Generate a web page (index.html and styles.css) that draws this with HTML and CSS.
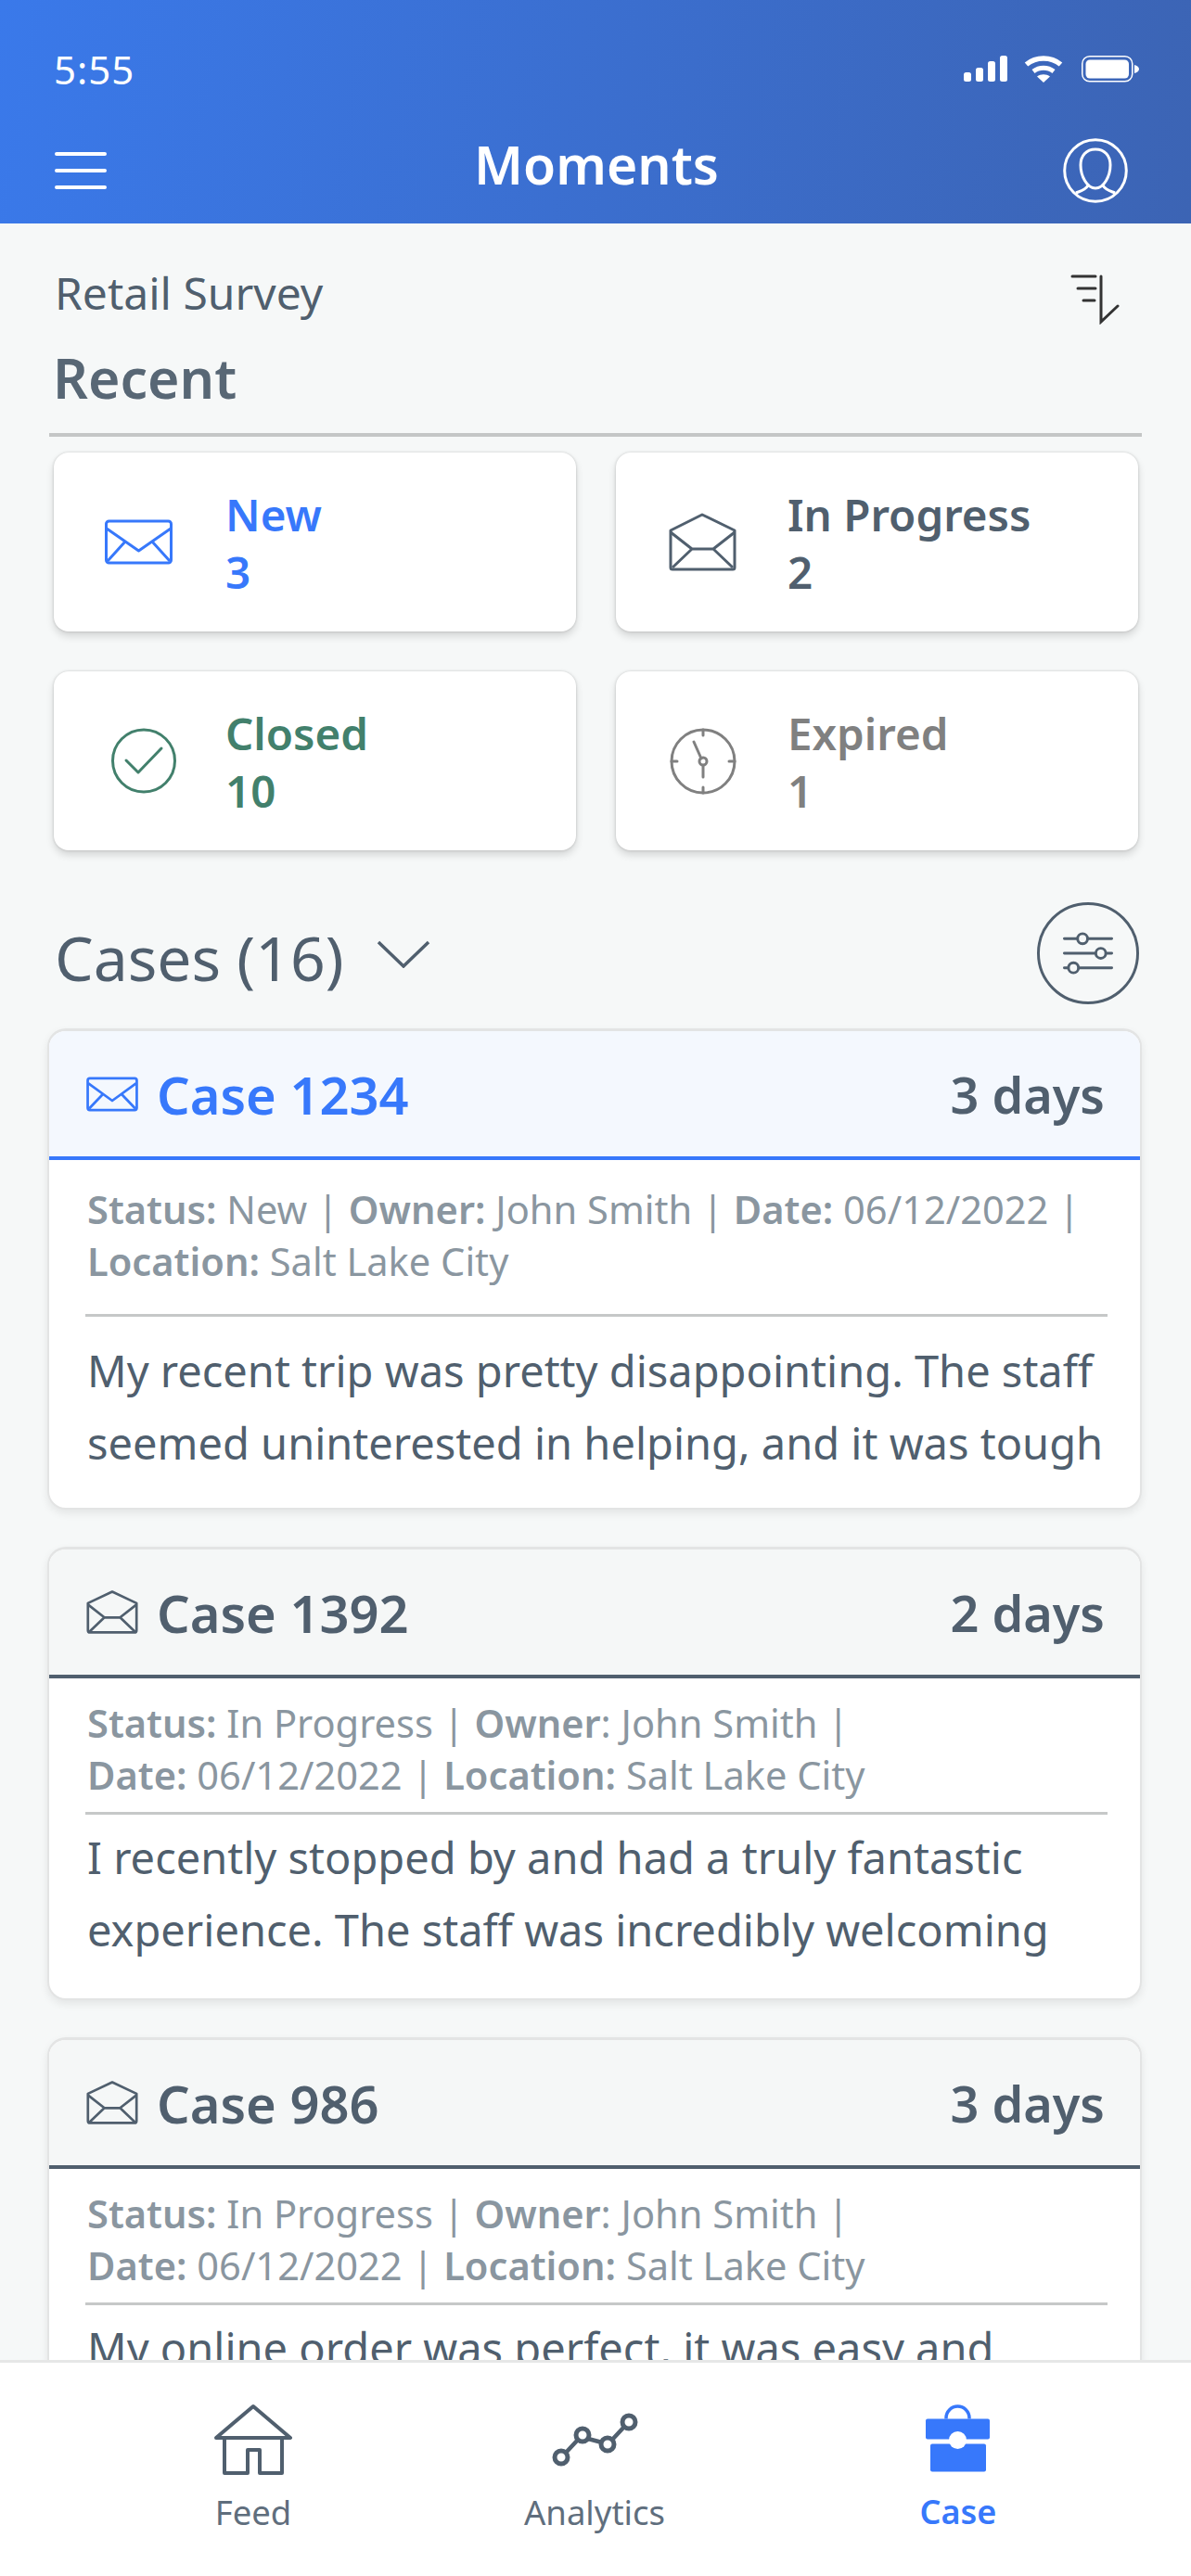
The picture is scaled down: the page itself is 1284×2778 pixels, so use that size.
FILE: index.html
```html
<!DOCTYPE html>
<html lang="en">
<head>
    <meta charset="UTF-8">
    <title>Moments</title>
    <link rel="stylesheet" href="styles.css">
</head>
<body>
<div class="phone">

    <header class="app-header">
        <div class="status-bar">
            <span class="time">5:55</span>
            <div class="status-icons">
                <svg width="47" height="28" viewBox="0 0 47 28" fill="#fff"><rect x="0" y="18" width="8" height="10" rx="2.5"/><rect x="13" y="13" width="8" height="15" rx="2.5"/><rect x="26" y="6" width="8" height="22" rx="2.5"/><rect x="39" y="0" width="8" height="28" rx="2.5"/></svg>
                <svg width="42" height="29" viewBox="0 0 42 29" fill="none" stroke="#fff"><path d="M2.5 9.5C13 .8 29 .8 39.500 9.500" stroke-width="5.500"/><path d="M10 17c6.500-5 15.500-5 22 0" stroke-width="5"/><path d="M14 22.500c4-3 10-3 14 0L21 29z" fill="#fff" stroke="none"/></svg>
                <svg width="62" height="29" viewBox="0 0 62 29" fill="none"><rect x=".75" y=".75" width="54" height="27" rx="8" stroke="#fff" stroke-width="1.500"/><rect x="4.500" y="4.500" width="46.500" height="20" rx="4.500" fill="#fff"/><path d="M57 10c3 .5 5 2.500 5 4.500s-2 4-5 4.500z" fill="#fff"/></svg>
            </div>
        </div>
        <div class="title-bar">
            <svg class="menu-icon" width="56" height="42" viewBox="0 0 56 42" stroke="#fff" stroke-width="4" stroke-linecap="round"><path d="M2 3h52M2 21h52M2 39h52"/></svg>
            <h1>Moments</h1>
            <svg class="avatar-icon" width="70" height="70" viewBox="0 0 70 70" fill="none" stroke="#fff" stroke-width="3"><circle cx="35" cy="35" r="33.300"/><path d="M35 12c-10 0-16 7-16 17 0 12 7 25 16 25s16-13 16-25c0-10-6-17-16-17z"/><path d="M14 59c5-2 10-3 13-8M43 51c3 5 8 6 13 8"/></svg>
        </div>
    </header>

    <main class="content">
        <div class="survey-row">
            <span class="survey-name">Retail Survey</span>
            <svg width="55" height="55" viewBox="0 0 55 55" fill="none" stroke="#333" stroke-width="3" stroke-linecap="round"><path d="M2 3h25M8 16h19M14 29h12M33 3v49l18-17"/></svg>
        </div>
        <h2 class="recent-title">Recent</h2>

        <div class="tiles">
            <div class="tile tile-new">
                <svg viewBox="0 0 80 80" width="80" height="80" fill="none" stroke="currentColor" stroke-width="3" stroke-linejoin="round"><rect x="3.500" y="17" width="70" height="45" rx="3"/><path d="M4 25l34.500 24L73 25M24 39L5 60M53 39l19 21"/></svg>
                <div class="tile-text">New<br>3</div>
            </div>
            <div class="tile tile-progress">
                <svg viewBox="0 0 80 80" width="80" height="80" fill="none" stroke="currentColor" stroke-width="3" stroke-linejoin="round"><path d="M6 27L40 10l35 17v40a2 2 0 0 1-2 2H8a2 2 0 0 1-2-2z"/><path d="M6 29l23 18h23l23-18M29 47L8 67M52 47l21 20"/></svg>
                <div class="tile-text">In Progress<br>2</div>
            </div>
            <div class="tile tile-closed">
                <svg viewBox="0 0 80 80" width="80" height="80" fill="none" stroke="currentColor" stroke-width="3" stroke-linecap="round" stroke-linejoin="round"><circle cx="44" cy="39.500" r="33.500"/><path d="M25 39l13 13 25-26"/></svg>
                <div class="tile-text">Closed<br>10</div>
            </div>
            <div class="tile tile-expired">
                <svg viewBox="0 0 80 80" width="80" height="80" fill="none" stroke="currentColor" stroke-width="3" stroke-linecap="round"><circle cx="41" cy="40" r="34"/><circle cx="41" cy="40" r="4"/><path d="M41 6v6M41 68v6M7 40h6M69 40h6M31 19l8 18M41 45v12"/></svg>
                <div class="tile-text">Expired<br>1</div>
            </div>
        </div>

        <div class="cases-row">
            <div class="cases-title">
                <span>Cases (16)</span>
                <svg width="58" height="30" viewBox="0 0 58 30" fill="none" stroke="#505f6e" stroke-width="3.500"><path d="M2 2l27 26L56 2"/></svg>
            </div>
            <svg width="110" height="110" viewBox="0 0 112 112" fill="none" stroke="#505f6e" stroke-width="3"><circle cx="56" cy="56" r="54.500"/><g stroke-linecap="round"><path d="M30 40h52M30 56h52M30 72h52"/></g><g fill="#f6f8f8"><circle cx="50" cy="40" r="5.500"/><circle cx="70" cy="56" r="5.500"/><circle cx="40" cy="72" r="5.500"/></g></svg>
        </div>

        <article class="case case-new">
            <div class="case-head">
                <svg width="56" height="38" viewBox="0 0 72 48" fill="none" stroke="currentColor" stroke-width="3.500" stroke-linejoin="round"><rect x="2" y="2" width="68" height="44" rx="3"/><path d="M3 9l33 24L69 9M23 24L4 44M49 24l19 20"/></svg>
                <span class="case-name">Case 1234</span>
                <span class="case-age">3 days</span>
            </div>
            <p class="case-meta"><b>Status:</b> New | <b>Owner:</b> John Smith | <b>Date:</b> 06/12/2022 |<br><b>Location:</b> Salt Lake City</p>
            <p class="case-body">My recent trip was pretty disappointing. The staff<br>seemed uninterested in helping, and it was tough</p>
        </article>

        <article class="case">
            <div class="case-head">
                <svg width="56" height="47" viewBox="0 0 72 61" fill="none" stroke="currentColor" stroke-width="3.500" stroke-linejoin="round"><path d="M2 18L36 2l34 16v38a3 3 0 0 1-3 3H5a3 3 0 0 1-3-3z"/><path d="M2 20l23 18h22l23-18M25 38L4 58M47 38l21 20"/></svg>
                <span class="case-name">Case 1392</span>
                <span class="case-age">2 days</span>
            </div>
            <p class="case-meta"><b>Status:</b> In Progress | <b>Owner</b>: John Smith |<br><b>Date:</b> 06/12/2022 | <b>Location:</b> Salt Lake City</p>
            <p class="case-body">I recently stopped by and had a truly fantastic<br>experience. The staff was incredibly welcoming</p>
        </article>

        <article class="case">
            <div class="case-head">
                <svg width="56" height="47" viewBox="0 0 72 61" fill="none" stroke="currentColor" stroke-width="3.500" stroke-linejoin="round"><path d="M2 18L36 2l34 16v38a3 3 0 0 1-3 3H5a3 3 0 0 1-3-3z"/><path d="M2 20l23 18h22l23-18M25 38L4 58M47 38l21 20"/></svg>
                <span class="case-name">Case 986</span>
                <span class="case-age">3 days</span>
            </div>
            <p class="case-meta"><b>Status:</b> In Progress | <b>Owner</b>: John Smith |<br><b>Date:</b> 06/12/2022 | <b>Location:</b> Salt Lake City</p>
            <p class="case-body">My online order was perfect, it was easy and</p>
        </article>
    </main>

    <nav class="tab-bar">
        <div class="tab">
            <svg width="86" height="78" viewBox="0 0 86 78" fill="none" stroke="#505f6e" stroke-width="4" stroke-linecap="round" stroke-linejoin="round"><path d="M3 37L43 3l40 34zM12 37v38h25V50h13v25h24V37"/></svg>
            <span>Feed</span>
        </div>
        <div class="tab">
            <svg width="97" height="78" viewBox="0 0 97 62" fill="none" stroke="#505f6e" stroke-width="4.500"><path d="M17 45l13-14M41 30l15 4M67 31l13-14"/><g stroke-width="5"><circle cx="12" cy="50" r="7"/><circle cx="35" cy="26" r="7"/><circle cx="62" cy="36" r="7"/><circle cx="85" cy="12" r="7"/></g></svg>
            <span>Analytics</span>
        </div>
        <div class="tab tab-active">
            <svg width="76" height="78" viewBox="0 0 76 75" fill="#3778fb"><rect x="3" y="15" width="69" height="22" rx="2"/><rect x="8" y="42" width="60" height="30" rx="2"/><circle cx="37.500" cy="38" r="9.500" fill="#fff"/><path d="M25 15v-1a12.500 12.500 0 0 1 25 0v1" fill="none" stroke="#3778fb" stroke-width="3.500"/></svg>
            <span>Case</span>
        </div>
    </nav>

</div>
</body>
</html>
```

FILE: styles.css
```css
* { box-sizing: border-box; }
body {
    margin: 0;
    font-family: "Noto Sans", sans-serif;
    color: #505f6e;
    background-color: #f6f8f8;
}
h1, h2, p { margin: 0; }
svg { display: block; flex-shrink: 0; }

.phone { width: 1284px; height: 2778px; display: flex; flex-direction: column; overflow: hidden; }

/* header */
.app-header {
    height: 241px;
    padding: 50px 56px 0 58px;
    flex-shrink: 0;
    color: #fff;
    background-image: linear-gradient(100deg, #3a79ea, #3c64b4);
}
.status-bar { height: 48px; display: flex; justify-content: space-between; align-items: center; }
.time { font-size: 42px; letter-spacing: 1px; }
.status-icons { display: flex; gap: 18px; align-items: center; }
.status-icons svg:last-child { margin-left: 2px; }
.title-bar { margin-top: 44px; height: 70px; display: grid; grid-template-columns: 1fr auto 1fr; align-items: center; }
.title-bar h1 { margin-bottom: 14px; font-size: 57px; font-weight: 600; line-height: 70px; }
.menu-icon { margin-left: 1px; }
.avatar-icon { justify-self: end; margin-right: 12px; }

/* main area */
.content { flex: 1; min-height: 0; overflow: hidden; padding: 0 53px 0 51px; }
.survey-row { height: 110px; padding: 54px 22px 0 8px; display: flex; justify-content: space-between; }
.survey-name { margin-top: -7px; font-size: 48px; line-height: 56px; }
.recent-title {
    height: 120px;
    margin-left: 2px;
    padding: 23px 0 0 4px;
    font-size: 59px;
    font-weight: 600;
    line-height: 66px;
    color: #586775;
    border-bottom: 4px solid #c4c6c6;
    margin-bottom: 17px;
}
.tiles { padding: 0 4px 0 7px; display: grid; grid-template-columns: 1fr 1fr; gap: 43px; }
.tile {
    height: 193px;
    padding-left: 53px;
    display: flex;
    align-items: center;
    gap: 52px;
    background-color: #fff;
    border-radius: 16px;
    box-shadow: 0 0 3px rgba(0,0,0,0.18), 0 5px 8px rgba(0,0,0,0.14);
}
.tile-text { padding-top: 3px; font-size: 47.500px; font-weight: 600; line-height: 62px; }
.tile-new { color: #3778fb; }
.tile-progress { color: #505f6e; }
.tile-closed { color: #42806c; }
.tile-expired { color: #808080; }

.cases-row { margin-top: 56px; padding: 0 3px 0 8px; display: flex; justify-content: space-between; align-items: center; }
.cases-title { display: flex; align-items: center; gap: 36px; font-size: 66px; margin-top: 8px; }
.cases-title svg { margin-top: -6px; }

/* case cards */
.case {
    margin-top: 26px;
    margin-bottom: 40px;
    background-color: #fff;
    border: 2px solid #e3e4e4;
    border-top-width: 3px;
    border-radius: 20px;
    box-shadow: 0 4px 10px rgba(0,0,0,0.08);
    overflow: hidden;
}
.case + .case { margin-top: 0; }
.case-head {
    height: 139px;
    padding: 0 38px 0 40px;
    display: flex;
    align-items: center;
    gap: 20px;
    background-color: #f5f7f7;
    border-bottom: 4px solid #505f6e;
    color: #505f6e;
}
.case-name { flex: 1; font-size: 56px; font-weight: 600; }
.case-age { font-size: 54px; font-weight: 600; color: #505f6e; }
.case-meta {
    margin: 0 35px 0 39px;
    padding: 20px 0 12px 2px;
    font-size: 41.6px;
    line-height: 56px;
    color: #8a96a0;
    border-bottom: 3px solid #c6c8c8;
    white-space: nowrap;
}
.case-meta b { font-weight: 600; }
.case-body { padding: 7px 20px 35px 41px; font-size: 47px; line-height: 78px; white-space: nowrap; }

.case-new .case-head { background-color: #f4f8fe; border-bottom-color: #3778fb; color: #3778fb; }
.case-new .case-meta { padding-top: 25px; padding-bottom: 29px; }
.case-new .case-body { padding-top: 19px; padding-bottom: 31px; }

/* bottom tabs */
.tab-bar {
    height: 233px;
    flex-shrink: 0;
    padding: 44px 0 0 173px;
    display: flex;
    gap: 168px;
    background-color: #fff;
    border-top: 3px solid #e6e7e7;
}
.tab { width: 200px; display: flex; flex-direction: column; align-items: center; gap: 17px; font-size: 36.500px; line-height: 44px; color: #5f6e7d; }
.tab-active { margin-left: 24px; color: #3778fb; font-weight: 600; font-size: 36px; }
```
